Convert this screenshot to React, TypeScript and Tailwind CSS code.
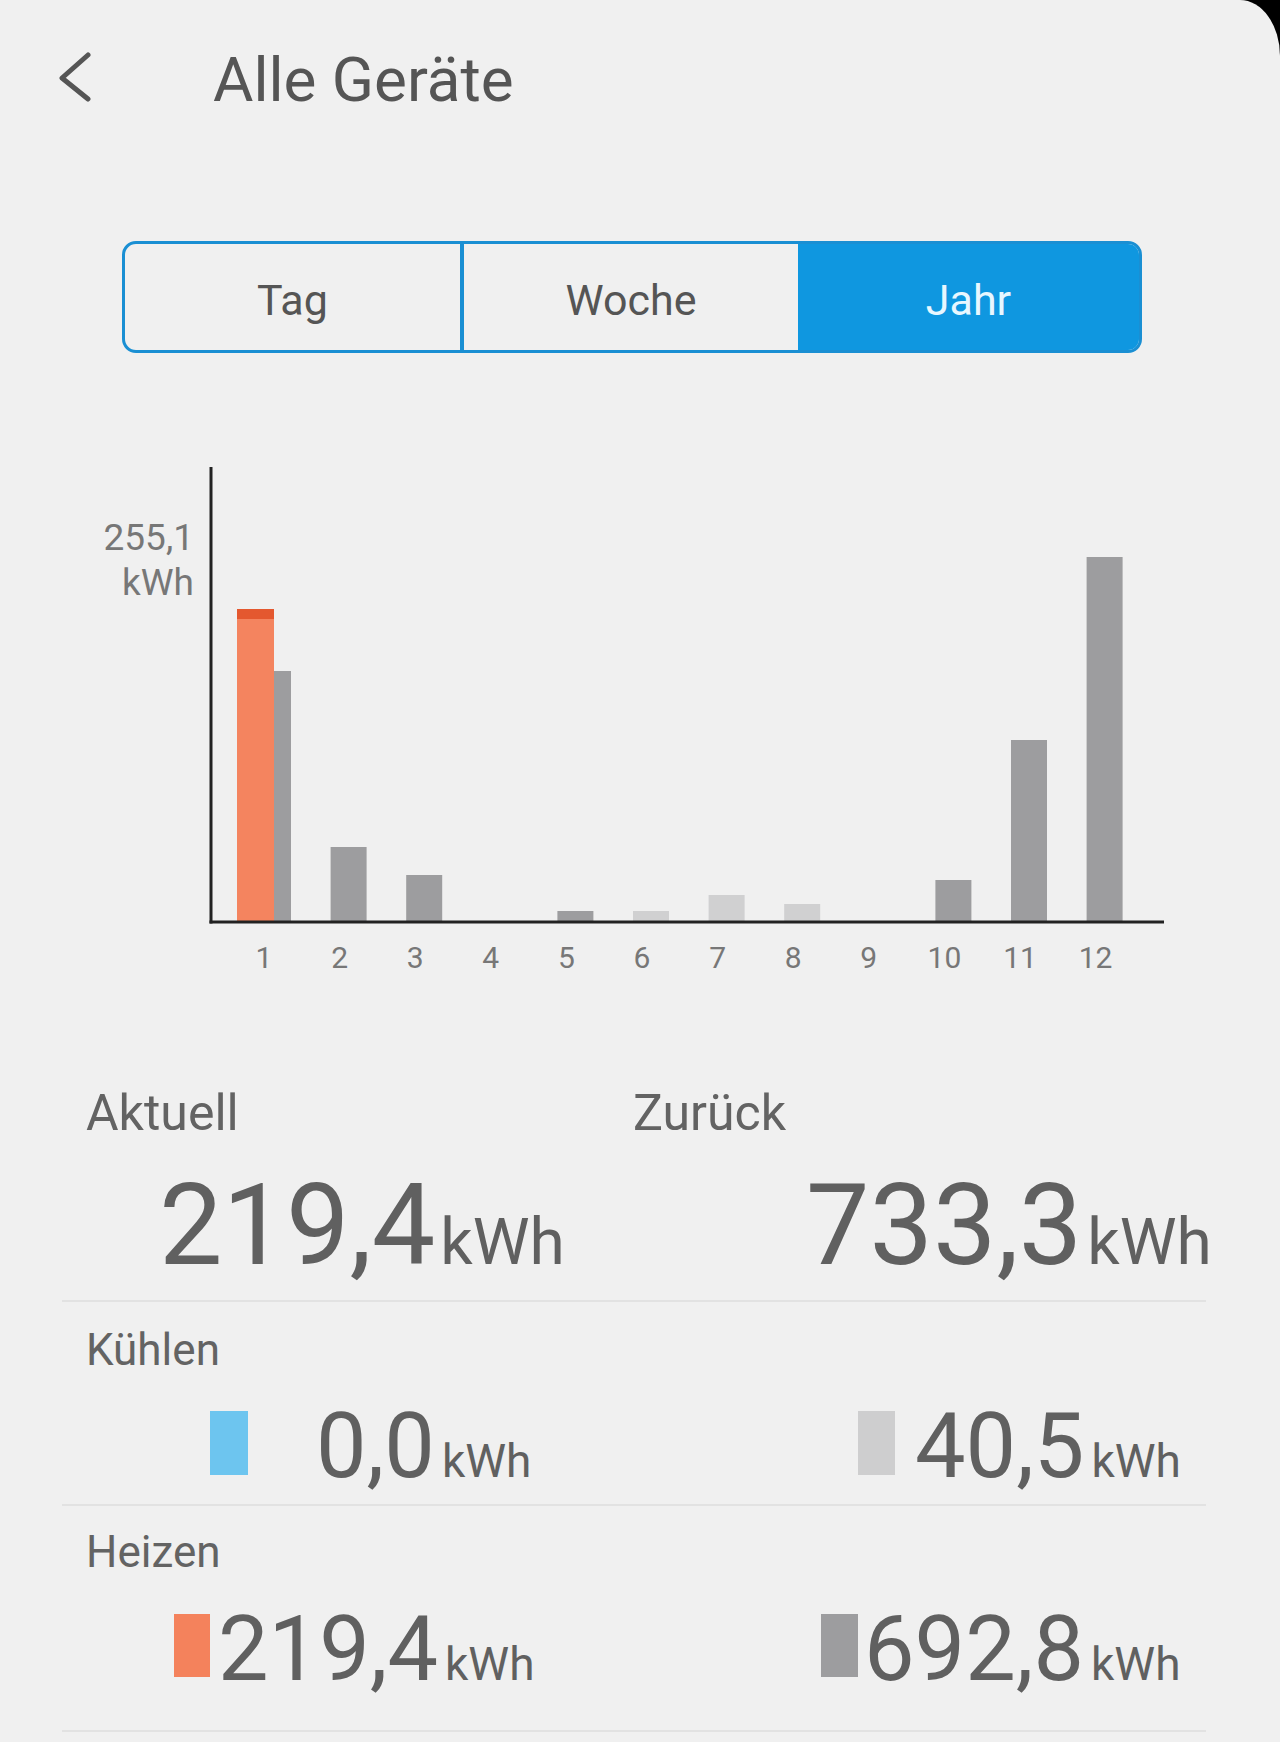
import React from "react";

const months = [
  { m: 1, prev: 250, cur: 312, light: false },
  { m: 2, prev: 74, cur: 0, light: false },
  { m: 3, prev: 46, cur: 0, light: false },
  { m: 4, prev: 0, cur: 0, light: false },
  { m: 5, prev: 10, cur: 0, light: false },
  { m: 6, prev: 10, cur: 0, light: true },
  { m: 7, prev: 26, cur: 0, light: true },
  { m: 8, prev: 17, cur: 0, light: true },
  { m: 9, prev: 0, cur: 0, light: false },
  { m: 10, prev: 41, cur: 0, light: false },
  { m: 11, prev: 181, cur: 0, light: false },
  { m: 12, prev: 364, cur: 0, light: false },
];

const BASE = 471;

function Chart() {
  return (
    <svg width="1280" height="536" viewBox="0 0 1280 536" className="block">
      {months.map((d, i) => {
        const c = 264 + i * 75.6;
        return (
          <g key={d.m}>
            {d.prev > 0 && (
              <rect x={c - 9} y={BASE - d.prev} width="36" height={d.prev} fill={d.light ? "#d0d0d1" : "#9d9d9f"} />
            )}
            {d.cur > 0 && (
              <>
                <rect x={c - 27} y={BASE - d.cur} width="37" height={d.cur} fill="#f4845f" />
                <rect x={c - 27} y={BASE - d.cur} width="37" height="10" fill="#e4582f" />
              </>
            )}
            <text x={c} y="518" textAnchor="middle" fontSize="30" fill="#777" fontFamily="Roboto, sans-serif">
              {d.m}
            </text>
          </g>
        );
      })}
      <line x1="211" y1="17" x2="211" y2="473.5" stroke="#222" strokeWidth="3" />
      <line x1="209.5" y1="472" x2="1164" y2="472" stroke="#222" strokeWidth="3" />
      <text x="194" y="100" textAnchor="end" fontSize="37" fill="#777" fontFamily="Roboto, sans-serif">
        255,1
      </text>
      <text x="194" y="145" textAnchor="end" fontSize="37" fill="#777" fontFamily="Roboto, sans-serif">
        kWh
      </text>
    </svg>
  );
}

function Divider({ className = "" }: { className?: string }) {
  return <div className={"h-[2px] bg-[#e2e2e2] " + className} />;
}

export default function App() {
  return (
    <div className="bg-black font-['Roboto',sans-serif]">
      <div className="min-h-[1742px] overflow-hidden rounded-tr-[40px_56px] bg-[#f0f0f0] pb-[10px]">
        {/* header */}
        <div className="mt-[44px] flex h-[72px] items-center">
          <svg width="34" height="52" viewBox="0 0 34 52" className="mb-[8px] ml-[58px]">
            <path d="M30 5 L4 28 L30 49" fill="none" stroke="#555" strokeWidth="5" strokeLinecap="round" strokeLinejoin="round" />
          </svg>
          <h1 className="ml-[121px] text-[62px] leading-[72px] text-[#555]">Alle Geräte</h1>
        </div>

        {/* period switch */}
        <div className="ml-[122px] mt-[125px] flex h-[112px] w-[1020px] overflow-hidden rounded-[14px] border-[3px] border-[#1a8fd3] text-[43px] leading-none">
          <div className="flex w-[339px] items-center justify-center border-r-[4px] border-[#1a8fd3] pt-[6px] text-[#555]">
            Tag
          </div>
          <div className="flex w-[334px] items-center justify-center pt-[6px] text-[#555]">Woche</div>
          <div className="flex flex-1 items-center justify-center bg-[#0f97e0] pt-[6px] text-[#e8f7ff]">Jahr</div>
        </div>

        <div className="mt-[97px]">
          <Chart />
        </div>

        {/* totals */}
        <div className="mx-[62px] w-[1144px] text-[#606060]">
          <div className="mt-[102px] grid grid-cols-[571px_1fr]">
            <div className="pl-[24px] text-[50px] leading-none text-[#636363]">Aktuell</div>
            <div className="text-[50px] leading-none text-[#636363]">Zurück</div>
          </div>
          <div className="mt-[31px] grid grid-cols-[573px_1fr]">
            <div className="flex items-baseline pl-[97px]">
              <span className="text-[113px] leading-none">219,4</span>
              <span className="ml-[5px] text-[64px] leading-none">kWh</span>
            </div>
            <div className="flex items-baseline pl-[171px]">
              <span className="text-[113px] leading-none">733,3</span>
              <span className="ml-[5px] text-[64px] leading-none">kWh</span>
            </div>
          </div>
          <Divider className="mt-[18px]" />

          <div className="mt-[26px] pl-[24px] text-[44px] leading-none text-[#636363]">Kühlen</div>
          <div className="mt-[30px] grid grid-cols-[573px_1fr]">
            <div className="flex items-end pl-[148px]">
              <div className="mb-[17px] h-[64px] w-[38px] bg-[#6dc5ef]" />
              <div className="ml-[68px] flex items-baseline">
                <span className="text-[90px] leading-none">0,0</span>
                <span className="ml-[7px] text-[46px] leading-none">kWh</span>
              </div>
            </div>
            <div className="flex items-end pl-[223px]">
              <div className="mb-[17px] h-[64px] w-[37px] bg-[#cececf]" />
              <div className="ml-[20px] flex items-baseline">
                <span className="text-[90px] leading-none">40,5</span>
                <span className="ml-[7px] text-[46px] leading-none">kWh</span>
              </div>
            </div>
          </div>
          <Divider className="mt-[12px]" />

          <div className="mt-[24px] pl-[24px] text-[44px] leading-none text-[#636363]">Heizen</div>
          <div className="mt-[31px] grid grid-cols-[573px_1fr]">
            <div className="flex items-end pl-[112px]">
              <div className="mb-[18px] h-[63px] w-[36px] bg-[#f4825c]" />
              <div className="ml-[8px] flex items-baseline">
                <span className="text-[90px] leading-none">219,4</span>
                <span className="ml-[7px] text-[46px] leading-none">kWh</span>
              </div>
            </div>
            <div className="flex items-end pl-[186px]">
              <div className="mb-[18px] h-[63px] w-[37px] bg-[#9d9d9f]" />
              <div className="ml-[6px] flex items-baseline">
                <span className="text-[90px] leading-none">692,8</span>
                <span className="ml-[7px] text-[46px] leading-none">kWh</span>
              </div>
            </div>
          </div>
          <Divider className="mt-[35px]" />
        </div>
      </div>
    </div>
  );
}
